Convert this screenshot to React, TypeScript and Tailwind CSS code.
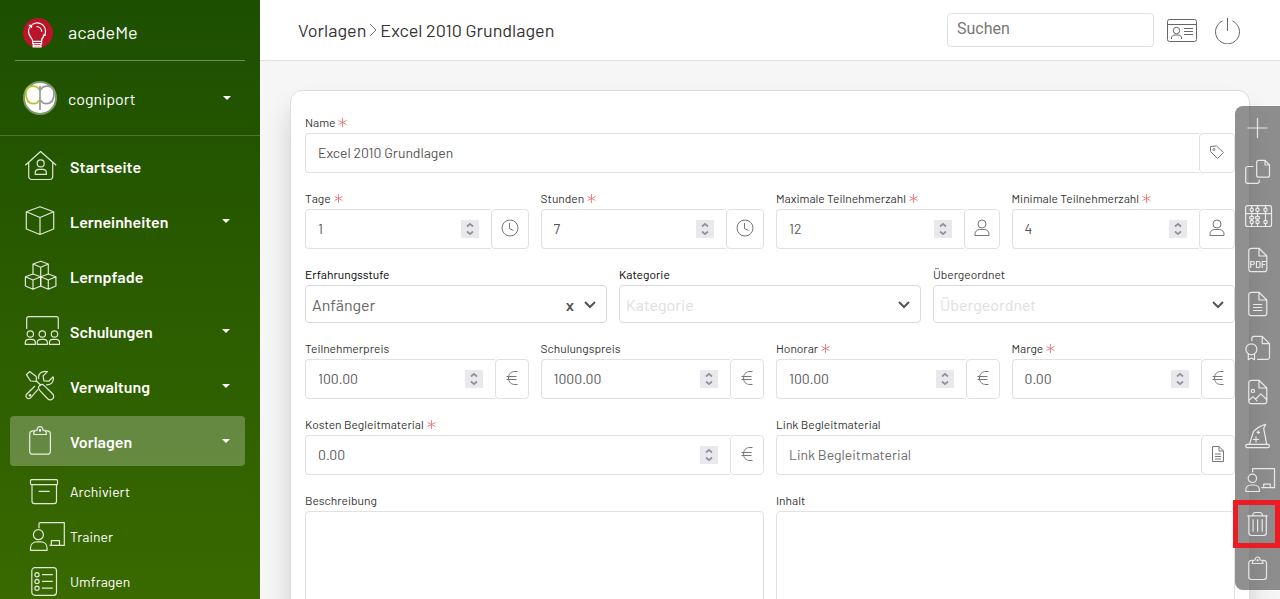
import { useState, type ReactNode } from "react";

type IconProps = { children: ReactNode; wide?: boolean };

function Icon({ children, wide }: IconProps) {
  return (
    <svg
      viewBox={wide ? "0 0 40 32" : "0 0 36 32"}
      className={wide ? "h-8 w-10 shrink-0 text-white/80" : "h-8 w-9 shrink-0 text-white/85"}
      fill="none"
      stroke="currentColor"
      strokeWidth="1.2"
      strokeLinejoin="round"
      aria-hidden="true"
    >
      {children}
    </svg>
  );
}

const navItems = [
  {
    label: "Startseite",
    caret: false,
    icon: (
      <>
        <path d="M1.3 15.3 16.6 1.5 32.2 15.3M4.7 12.8V26.5a3 3 0 0 0 3 3h18a3 3 0 0 0 3-3V12.8" />
        <circle cx="16.7" cy="13.4" r="3.5" />
        <path d="M11.2 24.3v-1.2c0-2.3 1.6-3.8 3.8-3.8h3.6c2.2 0 3.8 1.5 3.8 3.8v1.2z" />
      </>
    ),
  },
  {
    label: "Lerneinheiten",
    caret: true,
    icon: <path d="M16 1.7 29.7 6.8V24L16 29.5 2.3 24V6.8zM2.3 6.8 16 12.5 29.7 6.8M16 12.5v17" />,
  },
  {
    label: "Lernpfade",
    caret: false,
    icon: (
      <>
        <path d="M9 14V4l7.700-2.700L24.300 4v10M9 4l7.700 3.200L24.300 4M16.700 7.200v9.500" />
        <path d="M9 14 1.400 16.800V26L9 29.300l7.700-3.300v-9.200zM1.400 16.800 9 20l7.700-3.200M9 20v9.300" />
        <path d="m24.300 14 7.600 2.800V26l-7.600 3.300-7.600-3.300v-9.200zM16.700 16.800l7.600 3.200 7.600-3.200M24.300 20v9.300" />
      </>
    ),
  },
  {
    label: "Schulungen",
    caret: true,
    icon: (
      <>
        <path d="M2.700 14V3.700a2 2 0 0 1 2-2h27.600a2 2 0 0 1 2 2V14" />
        <circle cx="6.300" cy="19" r="3.200" />
        <circle cx="18.300" cy="19" r="3.200" />
        <circle cx="30.500" cy="19" r="3.200" />
        <path d="M1.200 29.300V28c0-2.200 1.500-3.700 3.600-3.700h3c2.100 0 3.600 1.500 3.600 3.700v1.300zM13.200 29.300V28c0-2.200 1.500-3.700 3.600-3.700h3c2.100 0 3.600 1.500 3.600 3.700v1.300zM25.400 29.300V28c0-2.200 1.500-3.700 3.600-3.700h3c2.100 0 3.600 1.500 3.600 3.700v1.300z" />
      </>
    ),
  },
  {
    label: "Verwaltung",
    caret: true,
    icon: (
      <>
        <path d="M2.400 4.700 5.700 1.500l6.500 5 .3 4.800-5.900-.3zM12.500 11.300l4.700 4.200" />
        <path d="M15.700 20.300c-1.800-1.700-1.400-3.500-.2-4.700 1.200-1.200 3.200-1.400 4.700 0l8.100 7.900c1.800 1.700 1.800 3.900.4 5.300-1.500 1.400-3.800 1.300-5.300-.3z" />
        <path d="m14 19.300-7.500 8.500c-2.300 2.300-5.800-.8-3.900-3.600l8.400-8.200M14.800 9.200c-1.300-5 2.700-9 8.600-7.600l-4.300 4.300.8 4.900 4.800.4 4.500-4.400c1 4.900-2.200 8.600-7 7.900" />
        <circle cx="6" cy="25.300" r=".7" fill="currentColor" />
      </>
    ),
  },
  {
    label: "Vorlagen",
    caret: true,
    active: true,
    icon: (
      <>
        <path d="M10.500 5.800H9a3.300 3.300 0 0 0-3.300 3.300v16.800A3.300 3.300 0 0 0 9 29.200h14.100a3.300 3.300 0 0 0 3.300-3.300V9.100a3.300 3.300 0 0 0-3.300-3.300h-1.500" />
        <path d="M9.700 9.500c0-2.800 1.300-4.300 3.300-4.300.4-4.700 5.600-4.700 6 0 2 0 3.400 1.500 3.400 4.300z" />
        <circle cx="16" cy="5.400" r=".7" fill="currentColor" />
      </>
    ),
  },
];

const subItems = [
  {
    label: "Archiviert",
    icon: (
      <>
        <rect x="1.500" y="3.700" width="27" height="5" rx="1" />
        <path d="M3 8.700v16.600a2.300 2.300 0 0 0 2.300 2.300h19.900a2.300 2.300 0 0 0 2.300-2.300V8.700M9.700 15.300h11" />
      </>
    ),
  },
  {
    label: "Trainer",
    icon: (
      <>
        <circle cx="9.400" cy="13.700" r="5" />
        <path d="M1.500 29.300v-2.200c0-3.700 2.700-6.200 6.200-6.200h4.200c3.500 0 6.200 2.500 6.200 6.200v2.200zM10 7.300V2.700a1 1 0 0 1 1-1h24.300v22.700H20.500M22.300 24.400v-4.700h8.200v4.700" />
      </>
    ),
  },
  {
    label: "Umfragen",
    icon: (
      <>
        <rect x="2.800" y="1.700" width="24.700" height="27.600" rx="3" />
        <circle cx="8" cy="8.700" r="2.100" />
        <circle cx="8" cy="15.400" r="2.100" />
        <circle cx="8" cy="22.200" r="2.100" />
        <path d="M13 8.700h10.800M13 15.400h10.800M13 22.200h10.800" />
      </>
    ),
  },
];

const docOutline = "M19 4.300h-7.700a2.500 2.500 0 0 0-2.500 2.500v18.400a2.500 2.500 0 0 0 2.500 2.500h13a2.500 2.500 0 0 0 2.500-2.500V12zM19 4.300V12h7.800";

const tools = [
  { label: "Neu", icon: <path d="M17.500 6v20M7.500 16h20" /> },
  {
    label: "Kopieren",
    icon: (
      <>
        <path d="M25 4.300h-6.300a2 2 0 0 0-2 2v12.900a2 2 0 0 0 2 2h8.800a2 2 0 0 0 2-2V9zM25 4.300V9h4.500" />
        <path d="M13.500 10.500H7.700a2 2 0 0 0-2 2v12.800a2 2 0 0 0 2 2h9.500a2 2 0 0 0 2-2v-1.500" />
      </>
    ),
  },
  {
    label: "Kompetenzen",
    icon: (
      <>
        <rect x="5.600" y="5.700" width="25.900" height="20.800" rx="2" />
        <path d="M5.600 13.700h25.900M11.700 5.700v20.800M17.500 5.700v20.800M25.500 5.700v20.800" />
        <g fill="#929292">
          <circle cx="11.700" cy="9.800" r="1.700" />
          <circle cx="17.500" cy="9.800" r="1.700" />
          <circle cx="25.500" cy="9.800" r="1.700" />
          <rect x="9.700" y="16.300" width="4" height="2.600" rx="1" />
          <rect x="15.500" y="16.300" width="4" height="2.600" rx="1" />
          <circle cx="11.700" cy="22" r="1.700" />
          <circle cx="17.500" cy="22" r="1.700" />
          <circle cx="25.500" cy="22" r="1.700" />
        </g>
      </>
    ),
  },
  {
    label: "PDF",
    icon: (
      <>
        <path d={docOutline} />
        <text
          x="18"
          y="23.500"
          textAnchor="middle"
          fontSize="9.500"
          fontWeight="600"
          fill="currentColor"
          stroke="none"
        >
          PDF
        </text>
      </>
    ),
  },
  {
    label: "Dokument",
    icon: (
      <>
        <path d={docOutline} />
        <path d="M13 16.500h9.300M13 19.500h9.300M13 22.500h9.300" />
      </>
    ),
  },
  {
    label: "Zertifikat",
    icon: (
      <>
        <path d="M11.800 9V6.800a2.500 2.500 0 0 1 2.500-2.500h7.900l7.300 7.400v13.300a2.300 2.300 0 0 1-2.300 2.300H17M22.200 4.300v7.400h7.300" />
        <circle cx="11.400" cy="17.300" r="5.500" />
        <path d="M8.300 22v5.700l3.100-1.800 3.100 1.800V22" />
      </>
    ),
  },
  {
    label: "Bild",
    icon: (
      <>
        <path d={docOutline} />
        <circle cx="12.900" cy="14.900" r="1.600" />
        <path d="m9 24.300 4-3.700 4.300 4.500M15.500 23.200l5.400-5.300 5.700 5.600" />
      </>
    ),
  },
  {
    label: "Assistent",
    icon: (
      <>
        <rect x="5.700" y="24.300" width="23.700" height="3.300" rx="1.600" />
        <path d="m9.500 24.300 3.900-12.600c3.600-4.300 7.500-6 12.200-7.400l-1.900 4.300 3 15.700M16 16.500v6M13 19.500h6M18.300 10.500v3.600M16.500 12.300h3.600" />
      </>
    ),
  },
  {
    label: "Trainer",
    icon: (
      <>
        <circle cx="12.400" cy="14.300" r="4.200" />
        <path d="M5.800 27.500v-1.300c0-3.200 2.200-5.200 5-5.200h3.600c2.800 0 5 2 5 5.200v1.300zM12.700 8.300V4.700h21.800v19H21.300M23.700 23.700v-3.500h6.600v3.500" />
      </>
    ),
  },
  {
    label: "Löschen",
    highlighted: true,
    icon: (
      <path d="M7.300 7.800h20.400M12.700 7.800c0-2.400 1-3.300 2.700-3.300h4.300c1.700 0 2.700.9 2.700 3.300M8.900 7.800v17a2.700 2.700 0 0 0 2.700 2.700h12a2.700 2.700 0 0 0 2.700-2.700v-17M13.100 11.300v12.500M17.600 11.300v12.500M22.200 11.300v12.500" />
    ),
  },
  {
    label: "Vorlage",
    icon: (
      <>
        <path d="M12.800 8.300h-1.300a2.700 2.700 0 0 0-2.700 2.700v13.800a2.700 2.700 0 0 0 2.700 2.700h12.300a2.700 2.700 0 0 0 2.700-2.700V11a2.700 2.700 0 0 0-2.700-2.700h-1.300" />
        <path d="M12.300 11.500c0-2.300 1-3.500 2.700-3.500.4-4 4.800-4 5.200 0 1.700 0 2.800 1.200 2.800 3.500z" />
        <circle cx="17.600" cy="8.300" r=".5" fill="currentColor" />
      </>
    ),
  },
];

function Caret() {
  return (
    <svg viewBox="0 0 8 4" className="h-1 w-2" fill="currentColor" aria-hidden="true">
      <path d="M0 0h8L4 4z" />
    </svg>
  );
}

function Star() {
  return (
    <svg viewBox="0 0 9 9" className="h-[9px] w-[9px]" stroke="#f0646a" strokeWidth=".8" aria-hidden="true">
      <path d="M4.500 0v9M.5 2.500l8 4M8.500 2.500l-8 4" />
    </svg>
  );
}

function EuroIcon() {
  return (
    <svg viewBox="0 0 14 16" className="h-4 w-3.5" fill="none" stroke="currentColor" aria-hidden="true">
      <path d="M12.500 1.500H10c-4 0-6.500 2.500-6.500 6.500s2.500 6.500 6.500 6.500h2.500M1.500 6.500h10M1.500 9.500h10" />
    </svg>
  );
}

function ClockIcon() {
  return (
    <svg viewBox="0 0 18 18" className="h-[18px] w-[18px]" fill="none" stroke="currentColor" aria-hidden="true">
      <circle cx="9" cy="9" r="8" />
      <path d="M8.500 4v5.500l4 2" />
    </svg>
  );
}

function PersonIcon() {
  return (
    <svg viewBox="0 0 16 18" className="h-[18px] w-4" fill="none" stroke="currentColor" aria-hidden="true">
      <circle cx="8" cy="5" r="4" />
      <path d="M1 16.500V15c0-2.500 2-4.500 4.500-4.500h5C13 10.500 15 12.500 15 15v1.500z" />
    </svg>
  );
}

function TagIcon() {
  return (
    <svg viewBox="0 0 16 16" className="h-4 w-4" fill="none" stroke="currentColor" strokeLinejoin="round" aria-hidden="true">
      <path d="M1.500 2.500v5l7 7 6-6-7-6.500z" />
      <circle cx="4.800" cy="5.500" r="1" />
    </svg>
  );
}

function FileIcon() {
  return (
    <svg viewBox="0 0 14 18" className="h-[18px] w-3.5" fill="none" stroke="currentColor" aria-hidden="true">
      <path d="M8 1.500H1.500v15h11V6zM8 1.500V6h4.500M4 9h6M4 11.500h6M4 14h6" />
    </svg>
  );
}

type FieldProps = {
  id: string;
  label: string;
  value?: string;
  placeholder?: string;
  required?: boolean;
  number?: boolean;
  addon: "clock" | "person" | "euro" | "tag" | "file";
};

const addonIcons = {
  clock: <ClockIcon />,
  person: <PersonIcon />,
  euro: <EuroIcon />,
  tag: <TagIcon />,
  file: <FileIcon />,
};

const addonWidths = {
  clock: "w-[38px]",
  person: "w-9",
  euro: "w-[34px]",
  tag: "w-9",
  file: "w-[34px]",
};

function FieldLabel({ id, label, required, dark }: { id: string; label: string; required?: boolean; dark?: boolean }) {
  return (
    <label
      htmlFor={id}
      className={`mb-1 flex items-center gap-[3px] text-xs leading-[14px] ${dark ? "text-black" : "text-[#333]"}`}
    >
      {label}
      {required && <Star />}
    </label>
  );
}

function Field({ id, label, value = "", placeholder, required, number, addon }: FieldProps) {
  const [current, setCurrent] = useState(value);

  return (
    <div>
      <FieldLabel id={id} label={label} required={required} />
      <div className="flex h-10">
        <div className="flex min-w-0 flex-1 items-center rounded-l border border-r-0 border-[#e1e1e1] px-3">
          <input
            id={id}
            type={number ? "number" : "text"}
            value={current}
            placeholder={placeholder}
            onChange={(e) => setCurrent(e.target.value)}
            className="w-full min-w-0 flex-1 bg-transparent text-sm text-[#555] outline-none [appearance:textfield] placeholder:text-[#6c6c6c] [&::-webkit-inner-spin-button]:appearance-none"
          />
          {number && (
            <span className="flex h-[18px] w-[18px] items-center justify-center bg-[#e9e9ed] text-[#8f8f9d]">
              <svg viewBox="0 0 10 14" className="h-3.5 w-2.5" fill="none" stroke="currentColor" strokeWidth="1.7" aria-hidden="true">
                <path d="m2 4.500 3-2.700 3 2.700M2 9.500l3 2.700 3-2.700" />
              </svg>
            </span>
          )}
        </div>
        <span
          className={`flex items-center justify-center rounded border border-[#e1e1e1] pb-0.5 text-[#777] ${addonWidths[addon]}`}
        >
          {addonIcons[addon]}
        </span>
      </div>
    </div>
  );
}

function SelectField({ id, label, options, clearable, dark }: { id: string; label: string; options: string[]; clearable?: boolean; dark?: boolean }) {
  const [value, setValue] = useState(clearable ? options[0] : "");

  return (
    <div>
      <FieldLabel id={id} label={label} dark={dark} />
      <div className="relative">
        <select
          id={id}
          value={value}
          onChange={(e) => setValue(e.target.value)}
          className={`block h-[38px] w-full appearance-none rounded border border-[#d9d9dc] bg-transparent pl-1.5 pr-12 pt-0.5 text-base outline-none ${value ? "text-[#666]" : "text-[#dedede]"}`}
        >
          <option value="">{label}</option>
          {options.map((option) => (
            <option key={option} value={option}>
              {option}
            </option>
          ))}
        </select>
        {value && (
          <button
            type="button"
            aria-label="Auswahl entfernen"
            onClick={() => setValue("")}
            className="absolute right-[33px] top-2 text-base font-semibold leading-6 text-[#555]"
          >
            x
          </button>
        )}
        <svg
          viewBox="0 0 12 8"
          className="pointer-events-none absolute right-[11px] top-4 h-2 w-3"
          fill="none"
          stroke="#555"
          strokeWidth="2"
          aria-hidden="true"
        >
          <path d="m1 1 5 5 5-5" />
        </svg>
      </div>
    </div>
  );
}

function TextAreaField({ id, label }: { id: string; label: string }) {
  return (
    <div>
      <FieldLabel id={id} label={label} />
      <textarea
        id={id}
        rows={8}
        className="block w-full resize-none rounded border border-[#e1e1e1] px-3 py-2 text-sm text-[#555] outline-none"
      />
    </div>
  );
}

function Sidebar() {
  return (
    <aside className="w-[260px] shrink-0 bg-gradient-to-b from-[#1c4f00] to-[#396900] text-white">
      <a href="#" className="mx-[15px] flex h-[61px] items-center gap-[15px] border-b border-white/35 pl-2 pt-1.5 text-lg">
        <svg viewBox="0 0 30 30" className="h-[30px] w-[30px]" fill="none" stroke="white" strokeWidth="1.2" aria-hidden="true">
          <circle cx="15" cy="15" r="15" fill="#ba1428" stroke="none" />
          <path d="M9.700 23.300c.1-3-4.200-4.700-4.200-9.700 0-2.300.7-4.200 2.200-5.800M9.300 6.500c5.700-3.600 12.700-.3 13.200 6.300.1 1.800-.2 3.300-1 4.700M20.500 18.500c-1.300 1.600-1.900 3.200-1.900 4.800M13.500 8.500c3.300.3 5 2.200 5.300 5.200M5.700 7.300l3-.1-.3 2.800M22.800 17.400l-2.300-.2-.3 2.500M9.700 23.300h8.900v2.200H9.700zM10.200 25.500v3.300h7.800v-3.300M10.200 27.300H18" />
        </svg>
        <span className="pb-0.5">acadeMe</span>
      </a>

      <button type="button" className="flex h-[75px] w-full items-center border-b border-white/20 pl-[23px] pr-[29px] text-base">
        <svg viewBox="0 0 34 34" className="mr-[11px] h-[34px] w-[34px]" fill="none" strokeWidth="1.7" aria-hidden="true">
          <circle cx="17" cy="17" r="16" fill="white" stroke="#7c9b6b" strokeWidth="2" />
          <path d="M16.200 9c-1-3-3.700-3.900-6.700-3.900C5.500 5.100 3 7.500 3 12c0 7 2.500 10.700 7.500 10.700 3 0 4.700-1.200 5.700-3.700" stroke="#b4c72e" />
          <path d="M17.800 9c1-3 3.700-3.900 6.700-3.900 4 0 6.500 2.400 6.500 6.900 0 7-2.500 10.700-7.500 10.700-3 0-4.700-1.200-5.700-3.700M17 5v24" stroke="#999" />
        </svg>
        <span className="flex-1 pt-0.5 text-left">cogniport</span>
        <Caret />
      </button>

      <nav className="mt-[5px] flex flex-col gap-[5px] pl-2.5 pr-[15px]">
        {navItems.map((item) => (
          <a
            key={item.label}
            href="#"
            className={`flex h-[50px] items-center gap-2.5 rounded pl-3.5 pr-[15px] text-base font-semibold ${item.active ? "bg-white/25" : ""}`}
          >
            <Icon>{item.icon}</Icon>
            <span className="flex-1 pt-0.5">{item.label}</span>
            {item.caret && <Caret />}
          </a>
        ))}
      </nav>

      <nav className="mt-[3px] pl-[29px]">
        {subItems.map((item) => (
          <a key={item.label} href="#" className="flex h-[45px] items-center gap-[5px] text-sm">
            <Icon>{item.icon}</Icon>
            {item.label}
          </a>
        ))}
      </nav>
    </aside>
  );
}

function Header() {
  return (
    <header className="flex h-[61px] shrink-0 items-center border-b border-[#e0e0e0] bg-white pl-[38px] pr-10">
      <nav className="flex flex-1 items-center gap-[3px] text-lg text-[#333]">
        <a href="#">Vorlagen</a>
        <svg viewBox="0 0 8 14" className="h-3.5 w-2" fill="none" stroke="#777" aria-hidden="true">
          <path d="m1 1 6 6-6 6" />
        </svg>
        <span>Excel 2010 Grundlagen</span>
      </nav>
      <input
        type="search"
        aria-label="Suchen"
        placeholder="Suchen"
        className="mr-[13px] h-[34px] w-[207px] rounded border border-[#e1e1e1] px-[9px] pb-[3px] font-[Roboto,sans-serif] text-base outline-none placeholder:text-[#777]"
      />
      <button type="button" aria-label="Profil" className="mr-[18px] pt-0.5 text-[#666]">
        <svg viewBox="0 0 30 24" className="block h-6 w-[30px]" fill="none" stroke="currentColor">
          <rect x=".5" y=".5" width="29" height="22" rx="2" />
          <path d="M.5 5.500h29M17 9.500h9M17 12.500h9M17 15.500h9M4.500 20v-1c0-2 1.600-3 3.500-3h3c1.900 0 3.500 1 3.500 3v1" />
          <circle cx="9.500" cy="11.500" r="3.200" />
        </svg>
      </button>
      <button type="button" aria-label="Abmelden" className="pt-0.5 text-[#666]">
        <svg viewBox="0 0 25 26" className="block h-[26px] w-[25px]" fill="none" stroke="currentColor">
          <path d="M12.500 0v13M7.500 3a12 12 0 1 0 10 0" />
        </svg>
      </button>
    </header>
  );
}

export default function App() {
  return (
    <div className="flex h-screen overflow-hidden bg-[#f6f6f6] font-[Barlow,Roboto,sans-serif]">
      <Sidebar />

      <div className="flex min-w-0 flex-1 flex-col">
        <Header />

        <main className="flex-1 overflow-hidden px-[30px] pt-[29px]">
          <form className="flex flex-col gap-[18px] rounded-xl border border-[#dcdcdc] bg-white px-3.5 pb-6 pt-6 shadow-[0_20px_27px_rgba(0,0,0,0.16)]">
            <Field id="name" label="Name" value="Excel 2010 Grundlagen" required addon="tag" />

            <div className="grid grid-cols-4 gap-x-3">
              <Field id="days" label="Tage" value="1" required number addon="clock" />
              <Field id="hours" label="Stunden" value="7" required number addon="clock" />
              <Field id="max" label="Maximale Teilnehmerzahl" value="12" required number addon="person" />
              <Field id="min" label="Minimale Teilnehmerzahl" value="4" required number addon="person" />
            </div>

            <div className="grid grid-cols-3 gap-x-3">
              <SelectField id="level" label="Erfahrungsstufe" options={["Anfänger"]} clearable dark />
              <SelectField id="category" label="Kategorie" options={[]} dark />
              <SelectField id="parent" label="Übergeordnet" options={[]} />
            </div>

            <div className="grid grid-cols-4 gap-x-3">
              <Field id="price" label="Teilnehmerpreis" value="100.00" number addon="euro" />
              <Field id="training-price" label="Schulungspreis" value="1000.00" number addon="euro" />
              <Field id="fee" label="Honorar" value="100.00" required number addon="euro" />
              <Field id="margin" label="Marge" value="0.00" required number addon="euro" />
            </div>

            <div className="grid grid-cols-2 gap-x-3">
              <Field id="material-cost" label="Kosten Begleitmaterial" value="0.00" required number addon="euro" />
              <Field id="material-link" label="Link Begleitmaterial" placeholder="Link Begleitmaterial" addon="file" />
            </div>

            <div className="grid grid-cols-2 gap-x-3">
              <TextAreaField id="description" label="Beschreibung" />
              <TextAreaField id="content" label="Inhalt" />
            </div>
          </form>
        </main>
      </div>

      <div className="fixed right-0 top-[106px] flex w-[45px] flex-col rounded-l-lg bg-[#555]/65 text-white">
        {tools.map((tool) => (
          <button
            key={tool.label}
            type="button"
            aria-label={tool.label}
            className="relative flex h-11 items-center pl-[5px]"
          >
            <Icon wide>{tool.icon}</Icon>
            {tool.highlighted && (
              <span className="absolute -inset-y-0.5 -left-0.5 right-0 border-[5px] border-[#ed1c24]" />
            )}
          </button>
        ))}
      </div>
    </div>
  );
}
